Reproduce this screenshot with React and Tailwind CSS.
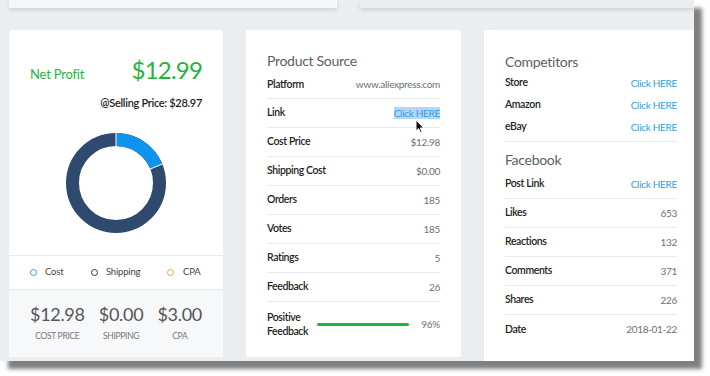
import React from "react";

function Row({ label, value, link, highlight, h = "h-[29px]", border = true }) {
  return (
    <div className={`${h} flex items-center justify-between ${border ? "border-b border-[#e7eaed]" : ""}`}>
      <span className="text-[10.5px] tracking-[-0.4px] font-semibold text-[#222]">{label}</span>
      {link ? (
        <span className={`text-[10px] tracking-[-0.3px] text-[#2d9ee0] ${highlight ? "bg-[#b5d6f6] leading-[12px]" : ""}`}>{value}</span>
      ) : (
        <span className="text-[10px] tracking-[-0.3px] text-[#6b6f75]">{value}</span>
      )}
    </div>
  );
}

function Donut() {
  return (
    <svg width="100" height="100" viewBox="0 0 100 100">
      <circle cx="50" cy="50" r="43.5" fill="none" stroke="#2f4a6e" strokeWidth="13" />
      <circle
        cx="50"
        cy="50"
        r="43.5"
        fill="none"
        stroke="#0e93ee"
        strokeWidth="13"
        strokeDasharray="51.4 300"
        transform="rotate(-90 50 50)"
      />
      <line x1="50" y1="-1" x2="50" y2="14" stroke="#ffffff" strokeWidth="1" />
      <line x1="96.7" y1="30.9" x2="83.8" y2="36.2" stroke="#ffffff" strokeWidth="1" />
    </svg>
  );
}

export default function App() {
  return (
    <div className="w-[710px] h-[376px] bg-white font-['Lato',sans-serif] overflow-hidden">
      <div className="w-[694px] h-[361px] bg-[#ebeef1] overflow-hidden shadow-[8px_8px_4px_rgba(0,0,0,0.5)]">
        {/* top strip */}
        <div className="h-[8px] flex">
          <div className="ml-[9px] w-[333px] h-[8px] bg-[#f6f6f6] shadow-[0_2px_4px_rgba(0,0,0,0.12)]" />
          <div className="ml-[23px] w-[340px] h-[8px] bg-[#ededed] shadow-[0_2px_4px_rgba(0,0,0,0.12)]" />
        </div>

        <div className="flex gap-[23px] pl-[9px] pt-[22px]">
          {/* Card 1 */}
          <div className="w-[214px] h-[327px] bg-white rounded-[2px] flex flex-col shrink-0 overflow-hidden">
            <div className="h-[226px] border-b border-[#e7eaed] flex flex-col px-[21px]">
              <div className="mt-[26px] flex items-baseline justify-between">
                <span className="text-[13px] tracking-[-0.2px] text-[#1fb53a]">Net Profit</span>
                <span className="text-[24px] leading-[28px] text-[#1fb53a] tracking-[-0.8px]">$12.99</span>
              </div>
              <div className="mt-[10px] text-right text-[11px] leading-[16px] tracking-[-0.3px] font-semibold text-[#222]">
                @Selling Price: $28.97
              </div>
              <div className="mt-[22px] flex justify-center">
                <Donut />
              </div>
            </div>
            <div className="h-[34px] border-b border-[#e7eaed] flex items-center pl-[21px] text-[9.5px] tracking-[-0.2px] text-[#444]">
              <span className="w-[7px] h-[7px] rounded-full border-[1.5px] border-[#3a9ee6]" />
              <span className="ml-[8px] w-[46px]">Cost</span>
              <span className="w-[7px] h-[7px] rounded-full border-[1.5px] border-[#333]" />
              <span className="ml-[8px] w-[61px]">Shipping</span>
              <span className="w-[7px] h-[7px] rounded-full border-[1.5px] border-[#f0a040]" />
              <span className="ml-[9px]">CPA</span>
            </div>
            <div className="flex-1 bg-[#f7f8fa] flex justify-between px-[21px] pt-[12px]">
              <div className="flex flex-col items-center">
                <span className="text-[18px] leading-[24px] tracking-[-0.3px] text-[#555]">$12.98</span>
                <span className="mt-[4px] text-[8.5px] leading-[12px] tracking-[-0.3px] text-[#777]">COST PRICE</span>
              </div>
              <div className="flex flex-col items-center">
                <span className="text-[18px] leading-[24px] tracking-[-0.3px] text-[#555]">$0.00</span>
                <span className="mt-[4px] text-[8.5px] leading-[12px] tracking-[-0.3px] text-[#777]">SHIPPING</span>
              </div>
              <div className="flex flex-col items-center">
                <span className="text-[18px] leading-[24px] tracking-[-0.3px] text-[#555]">$3.00</span>
                <span className="mt-[4px] text-[8.5px] leading-[12px] tracking-[-0.3px] text-[#777]">CPA</span>
              </div>
            </div>
          </div>

          {/* Card 2 */}
          <div className="relative w-[215px] h-[327px] bg-white rounded-[2px] px-[21px] pt-[21px] shrink-0">
            <div className="text-[14px] leading-[20px] tracking-[-0.3px] text-[#5a5f66]">Product Source</div>
            <Row h="h-[28px]" label="Platform" value="www.aliexpress.com" />
            <Row label="Link" value="Click HERE" link highlight />
            <Row label="Cost Price" value="$12.98" />
            <Row label="Shipping Cost" value="$0.00" />
            <Row label="Orders" value="185" />
            <Row label="Votes" value="185" />
            <Row label="Ratings" value="5" />
            <Row label="Feedback" value="26" />
            <div className="flex items-center pt-[8px]">
              <div className="w-[50px] text-[10.5px] leading-[14px] tracking-[-0.4px] font-semibold text-[#222]">
                Positive<br />Feedback
              </div>
              <div className="w-[95px] h-[3px] bg-[#eeeeee] rounded-full">
                <div className="w-[92px] h-[3px] bg-[#1fb53a] rounded-full" />
              </div>
              <span className="ml-auto text-[10px] tracking-[-0.3px] text-[#6b6f75]">96%</span>
            </div>
            {/* cursor */}
            <svg className="absolute left-[169px] top-[89px]" width="10" height="15" viewBox="0 0 10 15">
              <path d="M1 1 L1 12 L3.6 9.6 L5.4 13.8 L7 13.1 L5.3 9 L8.8 9 Z" fill="#111" stroke="#fff" strokeWidth="1" />
            </svg>
          </div>

          {/* Card 3 */}
          <div className="w-[215px] h-[340px] bg-white rounded-[2px] pl-[21px] pr-[22px] pt-[22px] shrink-0">
            <div className="text-[14px] leading-[20px] tracking-[-0.3px] text-[#5a5f66]">Competitors</div>
            <div className="border-b border-[#e7eaed] pb-[3px]">
              <Row h="h-[22px]" label="Store" value="Click HERE" link border={false} />
              <Row h="h-[22px]" label="Amazon" value="Click HERE" link border={false} />
              <Row h="h-[22px]" label="eBay" value="Click HERE" link border={false} />
            </div>
            <div className="mt-[8px] text-[14px] leading-[20px] tracking-[-0.3px] text-[#5a5f66]">Facebook</div>
            <Row label="Post Link" value="Click HERE" link />
            <Row label="Likes" value="653" />
            <Row label="Reactions" value="132" />
            <Row label="Comments" value="371" />
            <Row label="Shares" value="226" />
            <Row label="Date" value="2018-01-22" border={false} />
          </div>
        </div>
      </div>
    </div>
  );
}
